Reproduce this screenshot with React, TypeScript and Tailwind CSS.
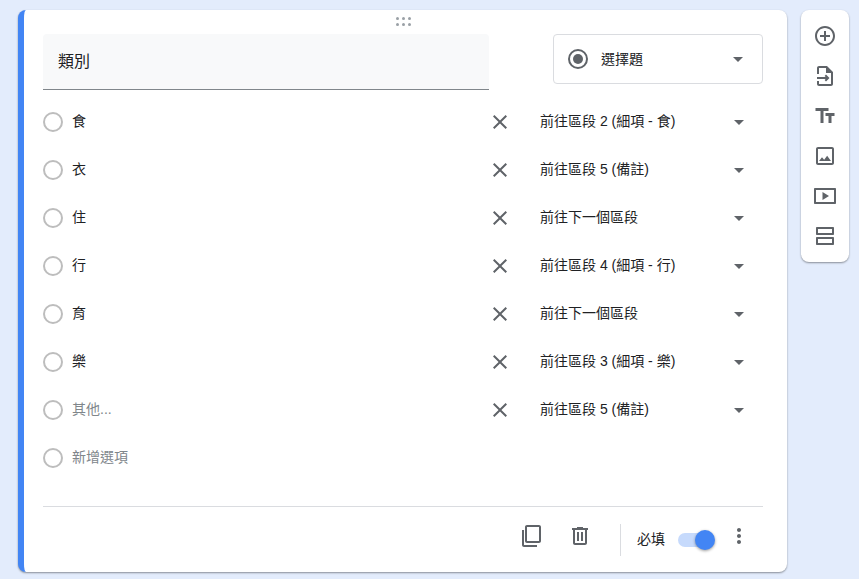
const FONT = "font-['Liberation_Sans','Noto_Sans_CJK_TC',sans-serif]";

function Icon({ d, size = 24, className = "" }: { d: string; size?: number; className?: string }) {
  return (
    <svg width={size} height={size} viewBox="0 0 24 24" fill="#5f6368" className={`block shrink-0 ${className}`}>
      <path d={d} />
    </svg>
  );
}

function Caret({ className = "" }: { className?: string }) {
  return <div className={`h-0 w-0 border-x-[5px] border-t-[5px] border-x-transparent border-t-[#5f6368] ${className}`} />;
}

function Radio() {
  return <div className="h-5 w-5 shrink-0 rounded-full border-2 border-[#bdbdbd]" />;
}

const rows = [
  { label: "食", target: "前往區段 2 (細項 - 食)" },
  { label: "衣", target: "前往區段 5 (備註)" },
  { label: "住", target: "前往下一個區段" },
  { label: "行", target: "前往區段 4 (細項 - 行)" },
  { label: "育", target: "前往下一個區段" },
  { label: "樂", target: "前往區段 3 (細項 - 樂)" },
  { label: "其他...", target: "前往區段 5 (備註)", muted: true },
];

const sideIcons = [
  "M13 7h-2v4H7v2h4v4h2v-4h4v-2h-4V7zm-1-5C6.48 2 2 6.48 2 12s4.48 10 10 10 10-4.48 10-10S17.52 2 12 2zm0 18c-4.41 0-8-3.59-8-8s3.59-8 8-8 8 3.59 8 8-3.59 8-8 8z",
  "M14 2H6c-1.1 0-2 .9-2 2v6h2V4h7v5h5v11H6v-3H4v3c0 1.1.9 2 2 2h12c1.1 0 2-.9 2-2V8l-6-6zM13 10.5l-1.4 1.4 1.1 1.1H4v2h8.7l-1.1 1.1 1.4 1.4 3.5-3.5z",
  "M2.5 4v3h5v12h3V7h5V4h-13zm19 5h-9v3h3v7h3v-7h3V9z",
  "M19 5v14H5V5h14m0-2H5c-1.1 0-2 .9-2 2v14c0 1.1.9 2 2 2h14c1.1 0 2-.9 2-2V5c0-1.1-.9-2-2-2zm-4.86 8.86l-3 3.87L9 13.14 6 17h12l-3.86-5.14z",
  "M9.5 8v8l6.5-4-6.5-4zM22 4H2c-.55 0-1 .45-1 1v14c0 .55.45 1 1 1h20c.55 0 1-.45 1-1V5c0-.55-.45-1-1-1zm-1 14H3V6h18v12z",
  "M20 3H4c-.55 0-1 .45-1 1v6c0 .55.45 1 1 1h16c.55 0 1-.45 1-1V4c0-.55-.45-1-1-1zm-1 6H5V5h14v4zm1 4H4c-.55 0-1 .45-1 1v6c0 .55.45 1 1 1h16c.55 0 1-.45 1-1v-6c0-.55-.45-1-1-1zm-1 6H5v-4h14v4z",
];

export default function App() {
  return (
    <div className={`flex h-[579px] w-[859px] items-start gap-[14px] overflow-hidden bg-[#e3ecfc] pl-[18px] pt-[10px] ${FONT}`}>
      <div className="relative flex h-[562px] w-[769px] shrink-0 flex-col rounded-lg border-l-[6px] border-[#4285f4] bg-white pl-[19px] pr-6 shadow-[0_1px_2px_rgba(0,0,0,0.4)]">
        <div className="absolute left-[372px] top-[7px] grid grid-cols-3 gap-x-[3px] gap-y-[3px]">
          {[0, 1, 2, 3, 4, 5].map((i) => (
            <div key={i} className="h-[3px] w-[3px] rounded-full bg-[#9aa0a6]" />
          ))}
        </div>

        <div className="mt-6 flex items-start justify-between">
          <div className="flex h-14 w-[446px] items-center rounded-t border-b border-[#80868b] bg-[#f8f9fa] pl-[15px] text-base text-[#202124]">
            類別
          </div>
          <div className="flex h-[50px] w-[210px] items-center rounded border border-[#dadce0] pl-[14px] pr-[19px]">
            <div className="flex h-5 w-5 items-center justify-center rounded-full border-2 border-[#5f6368]">
              <div className="h-[10px] w-[10px] rounded-full bg-[#5f6368]" />
            </div>
            <span className="ml-[13px] flex-1 text-sm text-[#202124]">選擇題</span>
            <Caret />
          </div>
        </div>

        <div className="mt-2 flex flex-col">
          {rows.map((r, i) => (
            <div key={i} className="flex h-12 items-center">
              <Radio />
              <span className={`mb-[2px] ml-[9px] w-[417px] text-sm ${r.muted ? "text-[#80868b]" : "text-[#202124]"}`}>{r.label}</span>
              <Icon
                size={24}
                className="ml-[-1px]"
                d="M19 6.41 17.59 5 12 10.59 6.41 5 5 6.41 10.59 12 5 17.59 6.41 19 12 13.41 17.59 19 19 17.59 13.41 12z"
              />
              <span className="mb-[2px] ml-[28px] w-[194px] text-sm text-[#202124]">{r.target}</span>
              <Caret className="mt-[1px]" />
            </div>
          ))}
          <div className="flex h-12 items-center">
            <Radio />
            <span className="mb-[2px] ml-[9px] text-sm text-[#80868b]">新增選項</span>
          </div>
        </div>

        <div className="mt-6 border-t border-[#dadce0]" />

        <div className="flex h-[65px] items-center justify-end">
          <Icon size={24} className="mb-[7px]" d="M7 1h12c1.1 0 2 .9 2 2v14c0 1.1-.9 2-2 2H7c-1.1 0-2-.9-2-2V3c0-1.1.9-2 2-2zM7 3v14h12V3H7zM2 6v15c0 1.1.9 2 2 2h13v-2H4V6H2z" />
          <Icon size={24} className="mb-[7px] ml-6" d="M15 4V3H9v1H4v2h1v13c0 1.1.9 2 2 2h10c1.1 0 2-.9 2-2V6h1V4h-5zm2 15H7V6h10v13zM9 8h2v9H9zm4 0h2v9h-2z" />
          <div className="ml-[28px] mr-4 h-8 w-px bg-[#dadce0]" />
          <span className="mb-[2px] text-sm text-[#202124]">必填</span>
          <div className="relative ml-[13px] h-[14px] w-[34px] rounded-full bg-[#c6dafc]">
            <div className="absolute left-[17px] top-[-3px] h-5 w-5 rounded-full bg-[#4285f4] shadow-[0_1px_3px_rgba(0,0,0,0.4)]" />
          </div>
          <Icon size={24} className="mb-[7px] ml-[15px] mr-3" d="M12 8c1.1 0 2-.9 2-2s-.9-2-2-2-2 .9-2 2 .9 2 2 2zm0 2c-1.1 0-2 .9-2 2s.9 2 2 2 2-.9 2-2-.9-2-2-2zm0 6c-1.1 0-2 .9-2 2s.9 2 2 2 2-.9 2-2-.9-2-2-2z" />
        </div>
      </div>

      <div className="flex h-[252px] w-[48px] shrink-0 flex-col items-center gap-4 rounded-lg bg-white pt-[14px] shadow-[0_1px_2px_rgba(0,0,0,0.4)]">
        {sideIcons.map((d, i) => (
          <Icon key={i} d={d} />
        ))}
      </div>
    </div>
  );
}
